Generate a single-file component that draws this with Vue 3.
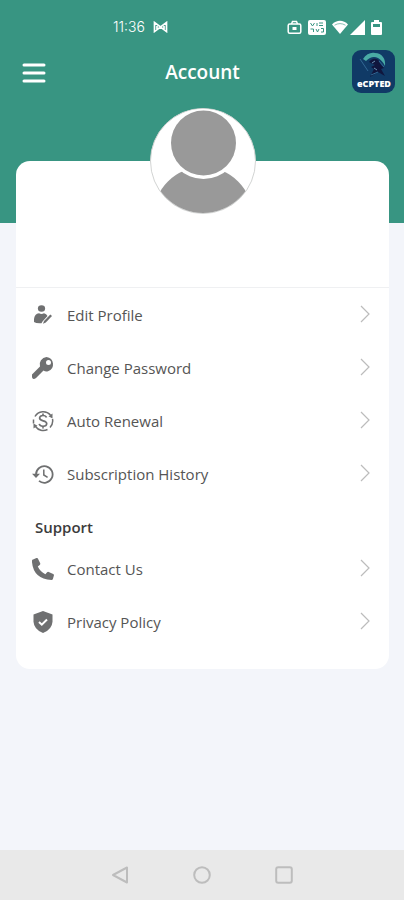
<script setup>
const accountItems = [
  { id: 'edit', label: 'Edit Profile' },
  { id: 'password', label: 'Change Password' },
  { id: 'renewal', label: 'Auto Renewal' },
  { id: 'history', label: 'Subscription History' },
]

const supportItems = [
  { id: 'contact', label: 'Contact Us' },
  { id: 'privacy', label: 'Privacy Policy' },
]

const groups = [
  { id: 'account', title: '', items: accountItems },
  { id: 'support', title: 'Support', items: supportItems },
]
</script>

<template>
  <div class="screen">
    <header class="header">
      <div class="status-bar">
        <div class="status-group">
          <span class="time">11:36</span>
          <svg width="15" height="12" viewBox="0 0 15 12" fill="none" stroke="currentColor" stroke-width="1.7">
            <path d="M1.5 10.5v-9l6 4.5 6-4.5v9l-6-4.5z M4 5v4M11 5v4" />
          </svg>
        </div>
        <div class="status-group icons">
          <svg width="15" height="15" viewBox="0 0 15 15" fill="none" stroke="currentColor" stroke-width="1.5">
            <rect x="1.2" y="4" width="12.6" height="9.2" rx="1.5" />
            <path d="M4.5 4l1-2.5h4l1 2.5" />
            <path d="M5.5 7h4v3h-4z" fill="currentColor" stroke="none" />
          </svg>
          <svg class="spaced" width="18" height="15" viewBox="0 0 18 15">
            <rect width="18" height="15" rx="2" fill="currentColor" />
            <path d="M2.5 3l2 3 2-3M9 3v3M11 3h4M11 5.5h4M2.5 9h3v3M8 9l1.5 3L11 9M13 8.5h2.5V12H13" fill="none" stroke="#389582" stroke-width="1" />
          </svg>
          <svg class="spaced" width="16" height="14" viewBox="0 0 16 14" fill="currentColor">
            <path d="M0 4.5C4.5-.5 11.500-.5 16 4.500L8 14z" />
            <path d="M2.500 5.200Q8 2 13.500 5.200" fill="none" stroke="#389582" stroke-width="0.6" />
          </svg>
          <svg width="15" height="15" viewBox="0 0 15 15" fill="currentColor">
            <path d="M15 0v15H0z" />
          </svg>
          <svg class="spaced" width="11" height="15" viewBox="0 0 11 15">
            <path d="M3 0h5v2h2q1 0 1 1v11q0 1-1 1H1q-1 0-1-1V3q0-1 1-1h2z" fill="currentColor" />
            <path d="M2 4h7v3H2z" fill="#389582" />
          </svg>
        </div>
      </div>

      <div class="toolbar">
        <button type="button" class="menu-button" aria-label="Menu">
          <svg width="24" height="20" viewBox="0 0 24 20" stroke="currentColor" stroke-width="3" stroke-linecap="round">
            <path d="M2 2h20M2 10h20M2 18h20" />
          </svg>
        </button>
        <h1 class="title">Account</h1>
        <svg class="logo" width="43" height="43" viewBox="0 0 43 43" role="img" aria-label="eCPTED">
          <rect width="43" height="43" rx="9" fill="#103a66" />
          <path d="M11 9C14 4 19 2 23 3c7 0 11 6 10 13-2-4-4-6-7-8-4-2-8-1-12 3z" fill="#49aaa5" />
          <path d="M17 12c3-4 8-4 10-1 1 3 3 5 5 7l-3 1 4 7-7-4-8 5 4-8-3-2 4-2z" fill="#10163d" />
          <path d="M8 9l8 12M27 11l5 6M19 25l7-3" fill="none" stroke="#326895" stroke-width="1" />
          <path d="M20 13l3-2M22 18l3 2" fill="none" stroke="#6d93b5" stroke-width="1" />
          <text x="22" y="37" text-anchor="middle">eCPTED</text>
        </svg>
      </div>
    </header>

    <main class="content">
      <section class="card">
        <div class="profile">
          <svg class="avatar" width="106" height="106" viewBox="0 0 106 106" role="img" aria-label="Profile picture">
            <defs>
              <clipPath id="avatar-clip">
                <circle cx="53" cy="53" r="52" />
              </clipPath>
            </defs>
            <circle cx="53" cy="53" r="52.5" fill="#fff" stroke="#d2d4d3" />
            <g clip-path="url(#avatar-clip)">
              <circle cx="53" cy="109" r="50" fill="#999" />
              <circle cx="53.5" cy="35" r="36" fill="#fff" />
              <circle cx="53.5" cy="35" r="32.5" fill="#999" />
            </g>
          </svg>
        </div>

        <nav v-for="group in groups" :key="group.id" :aria-label="group.title || 'Account'">
          <h2 v-if="group.title" class="group-title">{{ group.title }}</h2>
          <button v-for="item in group.items" :key="item.id" type="button" class="row">
            <svg class="row-icon" width="22" height="22" viewBox="0 0 22 22" fill="currentColor">
              <template v-if="item.id === 'edit'">
                <ellipse cx="9.5" cy="4.5" rx="3.6" ry="3.2" />
                <path d="M2 18v-3Q2.500 10 7 9.300q2.500 1.500 5 0 2.500.5 3.500 2.700l-5 5.500-1 1.700Q4 19.500 2 18z" />
                <path d="M12 17l6.300-6.500 1.700 1.600-6.200 6.500-2.800 1.200z" />
              </template>
              <path
                v-else-if="item.id === 'password'"
                fill-rule="evenodd"
                d="M14.500 0a7.300 7.300 0 0 1 1.500 14.200Q13.500 14.800 11.500 13.500L4 21q-1 1-2.500 1-1.500-.3-1.500-2v-2.500L8 9.500A7.300 7.300 0 0 1 14.500 0zm2 3a2.500 2.500 0 1 0 0 5 2.500 2.500 0 0 0 0-5z"
              />
              <template v-else-if="item.id === 'renewal'">
                <g fill="none" stroke="currentColor" stroke-width="1.5">
                  <path d="M3 6.500A9.500 9.500 0 0 1 18.500 5M20.500 9A9.500 9.500 0 0 1 18 17.500M15.500 19.500a9.500 9.500 0 0 1-12-3M1.500 13.500v-4" />
                  <path d="M14.500 7.500c-.5-1.500-1.800-2-3.500-2-2 0-3.400 1-3.400 2.600 0 3.700 7.100 1.800 7.100 5.500 0 1.700-1.500 2.700-3.700 2.700-2 0-3.400-.8-3.800-2.400M11 3.500v2M11 16.500v2" stroke-width="1.700" />
                </g>
                <path d="M20.500 3.500v5l-4-2.300zM1.500 18.500v-5l4 2.300z" />
              </template>
              <template v-else-if="item.id === 'history'">
                <g fill="none" stroke="currentColor" stroke-width="1.800">
                  <path d="M4 11.500a8.300 8.300 0 1 1 3 6.400" />
                  <path d="M11.800 6.500v5.500l3.800 2.400" stroke-width="1.500" />
                </g>
                <path d="M0 10.800h8l-4 4.200z" />
              </template>
              <path
                v-else-if="item.id === 'contact'"
                d="M1 1.500L4.500 0q1-.2 1.500.8l2.200 4.500q.3 1-.5 1.700L5.800 8.500q2.400 5.200 7.600 7.700l1.700-2q.7-.7 1.600-.3l4.500 2q1 .6.7 1.600l-1 3.500q-.3 1-1.400 1Q1 21-.1 3q0-1.100 1.100-1.500z"
              />
              <template v-else>
                <path d="M11 0l9.500 3.500v7.200Q20 18.500 11 22 2 18.500 1.500 10.700V3.500z" />
                <path d="M7 11l2.800 2.700L15 8.500" fill="none" stroke="#fff" stroke-width="2" />
              </template>
            </svg>
            <span class="row-label">{{ item.label }}</span>
            <svg class="chevron" width="10" height="18" viewBox="0 0 10 18" fill="none" stroke="currentColor" stroke-width="1.2">
              <path d="M1 1l8 8-8 8" />
            </svg>
          </button>
        </nav>
      </section>
    </main>

    <footer class="system-nav">
      <button type="button" aria-label="Back">
        <svg width="18" height="18" viewBox="0 0 18 18">
          <path d="M16 1.500v15L2 9z" />
        </svg>
      </button>
      <button type="button" aria-label="Home">
        <svg width="18" height="18" viewBox="0 0 18 18">
          <circle cx="9" cy="9" r="7.800" />
        </svg>
      </button>
      <button type="button" aria-label="Recent apps">
        <svg width="18" height="18" viewBox="0 0 18 18">
          <rect x="1.200" y="1.200" width="15.600" height="15.600" rx="2" />
        </svg>
      </button>
    </footer>
  </div>
</template>

<style>
body {
  background: #f3f5fa;
}
</style>

<style scoped>
.screen {
  display: flex;
  flex-direction: column;
  min-height: 100vh;
  font-family: 'Open Sans', 'Noto Sans', sans-serif;
  background: #f3f5fa;
}

button {
  margin: 0;
  padding: 0;
  border: 0;
  background: none;
  font: inherit;
  color: inherit;
  cursor: pointer;
}

svg {
  display: block;
  flex-shrink: 0;
}

.header {
  padding-bottom: 130px;
  color: #fff;
  background: #389582;
}

.status-bar {
  display: flex;
  align-items: center;
  justify-content: space-between;
  height: 50px;
  box-sizing: border-box;
  padding: 4px 22px 0 113px;
}

.status-group {
  display: flex;
  align-items: center;
  gap: 8px;
}

.status-group.icons {
  gap: 2px;
}

.spaced {
  margin-left: 4px;
}

.time {
  font-family: Inter, sans-serif;
  font-size: 14px;
  font-weight: 300;
  line-height: 20px;
}

.toolbar {
  display: grid;
  grid-template-columns: 1fr auto 1fr;
  align-items: center;
  height: 43px;
  padding: 0 9px 0 22px;
}

.menu-button {
  justify-self: start;
  padding-top: 3px;
}

.title {
  margin: 0;
  padding-right: 12px;
  font-size: 19px;
  font-weight: 600;
  line-height: 26px;
}

.logo {
  justify-self: end;
}

.logo text {
  font-family: 'Open Sans', sans-serif;
  font-size: 9px;
  font-weight: 800;
  fill: #fff;
}

.content {
  flex: 1;
  padding: 0 15px 24px 16px;
}

.card {
  margin-top: -62px;
  padding-bottom: 21px;
  border-radius: 14px;
  background: #fff;
}

.profile {
  display: flex;
  justify-content: center;
  height: 126px;
  border-bottom: 1px solid #eff0f2;
}

.avatar {
  margin-top: -53px;
}

.group-title {
  margin: 0;
  padding: 12px 19px 0;
  font-size: 15px;
  font-weight: 600;
  line-height: 30px;
  color: #3c3c3c;
}

.row {
  display: flex;
  align-items: center;
  gap: 13px;
  width: 100%;
  height: 53px;
  padding: 0 19px 0 16px;
  text-align: left;
}

.row-icon {
  color: #6f7071;
}

.row-label {
  flex: 1;
  font-size: 15px;
  line-height: 20px;
  color: #555;
}

.chevron {
  margin-bottom: 2px;
  color: #bcbcbc;
}

.system-nav {
  display: flex;
  align-items: center;
  justify-content: center;
  gap: 64px;
  height: 50px;
  background: #e9e9e9;
}

.system-nav svg {
  fill: none;
  stroke: #bdbdbd;
  stroke-width: 2;
  stroke-linejoin: round;
}
</style>
